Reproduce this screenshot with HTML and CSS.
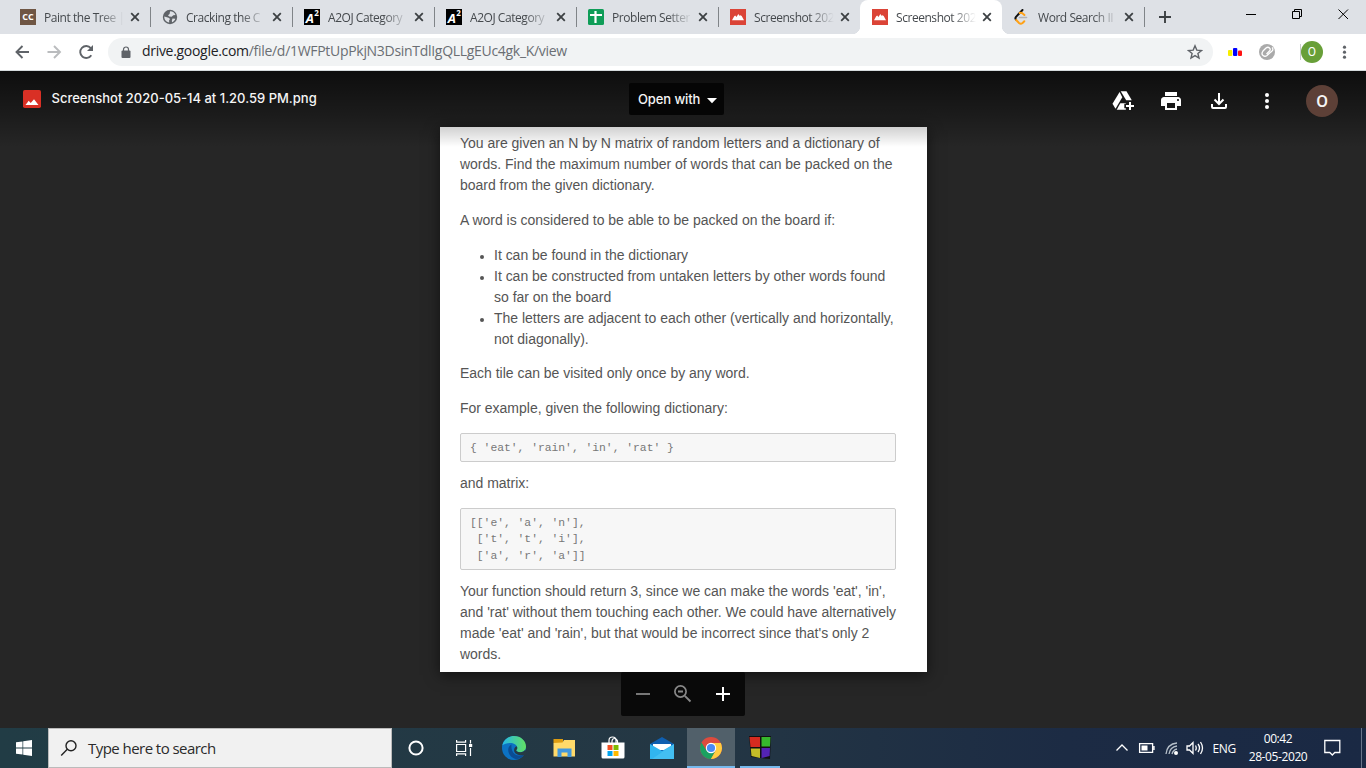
FILE: index.html
```html
<!DOCTYPE html>
<html lang="en">
<head>
<meta charset="utf-8">
<title>Screenshot 2020-05-14 at 1.20.59 PM.png</title>
<link rel="stylesheet" href="styles.css">
</head>
<body>
<svg class="defs" width="0" height="0">
  <symbol id="close" viewBox="0 0 10 10"><path d="M1.2 1.2l7.6 7.6M8.8 1.2L1.2 8.8" stroke="#3c4043" stroke-width="1.8" fill="none"/></symbol>
  <symbol id="image" viewBox="0 0 16 16"><path fill="#db4437" d="M0 0h16v16H0z"/><path fill="#fff" d="M2 11.3l2.2-4 1-.8 1.3 1.5L8.300 5l1.200 1.800 1-.6 1.200.8 2.300 4.300z"/></symbol>
</svg>
<header class="tabstrip">
  <div class="tab"><svg class="fav" viewBox="0 0 16 16"><rect width="16" height="16" fill="#6f5644"/><text x="8" y="11.300" text-anchor="middle" class="fav-cc">CC</text></svg><span class="tab-title">Paint the Tree |</span><svg class="x"><use href="#close"/></svg></div>
  <div class="tab"><svg class="fav" viewBox="0 0 16 16"><circle cx="8" cy="8" r="7.200" fill="#5f6368"/><path fill="#dee1e6" d="M8.200 2.300c2.500 0 4.600 1.500 5.300 3.700l-2.200.2-1.600 1.600-2.500-.3-1.200-1.300 1.600-1.100.2-1.500zM2.300 7.500l4.300 1.300 1.500 1.300-1 1.200.1 2.300c-3-.5-5-3-4.900-6.100zM10.500 9.500l2.800.2c-.5 1.600-1.700 2.900-3.200 3.500l-.3-1.500z"/></svg><span class="tab-title">Cracking the C</span><svg class="x"><use href="#close"/></svg></div>
  <div class="tab"><svg class="fav" viewBox="0 0 16 16"><rect width="16" height="16" fill="#000"/><text x="1.800" y="14.200" class="fav-a">A</text><text x="10.200" y="7" class="fav-2">2</text></svg><span class="tab-title">A2OJ Category</span><svg class="x"><use href="#close"/></svg></div>
  <div class="tab"><svg class="fav" viewBox="0 0 16 16"><rect width="16" height="16" fill="#000"/><text x="1.800" y="14.200" class="fav-a">A</text><text x="10.200" y="7" class="fav-2">2</text></svg><span class="tab-title">A2OJ Category</span><svg class="x"><use href="#close"/></svg></div>
  <div class="tab"><svg class="fav" viewBox="0 0 16 16"><rect width="16" height="16" rx="1.500" fill="#0f9d58"/><path d="M2 6h12M7.500 2v12" stroke="#fff" stroke-width="2.200"/></svg><span class="tab-title">Problem Setter</span><svg class="x"><use href="#close"/></svg></div>
  <div class="tab no-line"><svg class="fav"><use href="#image"/></svg><span class="tab-title">Screenshot 202</span><svg class="x"><use href="#close"/></svg></div>
  <div class="tab active no-line"><svg class="fav"><use href="#image"/></svg><span class="tab-title">Screenshot 202</span><svg class="x"><use href="#close"/></svg></div>
  <div class="tab"><svg class="fav" viewBox="0 0 16 16" fill="none" stroke-linecap="round"><path d="M5.500 8.500h7" stroke="#b3b3b3" stroke-width="1.600"/><path d="M8.500 1L2 7.800Q.8 9.200 2 10.700" stroke="#111" stroke-width="2"/><path d="M2.200 11l2.800 3q1.700 1.400 3.600 0l1.700-1.700M5.800 4q1.600-.7 2.900.5l1.700 1.500" stroke="#ffa116" stroke-width="2"/></svg><span class="tab-title">Word Search II</span><svg class="x"><use href="#close"/></svg></div>
  <svg class="newtab" viewBox="0 0 12 12"><path d="M0 6h12M6 0v12" stroke="#3c4043" stroke-width="1.900"/></svg>
  <svg class="winctl" viewBox="0 0 104 12" fill="none" stroke="#000"><path d="M0 6.500h10M46.500 3.500h7v7h-7zM48.500 3.500v-2h7v7h-2M92.500 1.500l9.500 9.500M102 1.500L92.500 11"/></svg>
</header>
<nav class="toolbar">
  <svg class="nav-icons" viewBox="0 0 84 20" fill="none" stroke-width="1.900"><path d="M15 10H2.500M8.500 4l-6 6 6 6" stroke="#5f6368"/><path d="M33.500 10H46M40 4l6 6-6 6" stroke="#babcbe"/><path d="M77.300 13.200A6 6 0 1 1 76.800 6.100" stroke="#5f6368"/><path d="M79 3v6h-6z" fill="#5f6368"/></svg>
  <div class="omnibox">
    <svg class="lock" viewBox="0 0 10 12"><path d="M2.500 5V3.500a2.500 2.500 0 0 1 5 0V5" fill="none" stroke="#5f6368" stroke-width="1.200"/><rect x=".5" y="4.500" width="9" height="7.500" rx="1" fill="#5f6368"/></svg>
    <span class="url"><b>drive.google.com</b>/file/d/1WFPtUpPkjN3DsinTdlIgQLLgEUc4gk_K/view</span>
    <svg class="star" viewBox="0 0 16 16"><path d="M8 1.800l1.800 4.300 4.700.4-3.600 3 1.100 4.600L8 11.600 4 14.100l1.100-4.600-3.600-3 4.700-.4z" fill="none" stroke="#5f6368" stroke-width="1.400"/></svg>
  </div>
  <svg class="exts" viewBox="0 0 136 24"><rect x="9" y="10" width="4.300" height="6" rx="1" fill="#f7ee00"/><rect x="14" y="8" width="4.300" height="8" rx="1" fill="#00f"/><rect x="19" y="10.500" width="4" height="5.500" rx="1" fill="#f11"/><circle cx="48" cy="12" r="8" fill="#aaa"/><path d="M53 7.500q1.800 1.500 0 3.500L48 15.500q-2 1.500-4 0t0-4.500l3-3q2-1.500 3.500 0t0 3L47.500 14" fill="none" stroke="#fff" stroke-width="1.300"/><path d="M81.500 4v16" stroke="#c9cbce"/><circle cx="93" cy="12" r="11" fill="#689f38"/><text x="93" y="16" text-anchor="middle" class="avatar-sm">O</text><g fill="#5f6368"><circle cx="125.500" cy="7.200" r="1.600"/><circle cx="125.500" cy="12.200" r="1.600"/><circle cx="125.500" cy="17.200" r="1.600"/></g></svg>
</nav>
<main class="viewer">
  <article class="page">
    <p>You are given an N by N matrix of random letters and a dictionary of<br>words. Find the maximum number of words that can be packed on the<br>board from the given dictionary.</p>
    <p>A word is considered to be able to be packed on the board if:</p>
    <ul>
      <li>It can be found in the dictionary</li>
      <li>It can be constructed from untaken letters by other words found<br>so far on the board</li>
      <li>The letters are adjacent to each other (vertically and horizontally,<br>not diagonally).</li>
    </ul>
    <p>Each tile can be visited only once by any word.</p>
    <p>For example, given the following dictionary:</p>
    <pre>{ 'eat', 'rain', 'in', 'rat' }</pre>
    <p>and matrix:</p>
    <pre class="matrix">[['e', 'a', 'n'],
 ['t', 't', 'i'],
 ['a', 'r', 'a']]</pre>
    <p>Your function should return 3, since we can make the words 'eat', 'in',<br>and 'rat' without them touching each other. We could have alternatively<br>made 'eat' and 'rain', but that would be incorrect since that's only 2<br>words.</p>
  </article>
  <div class="topbar">
    <div class="file"><svg width="18" height="18" viewBox="0 0 18 18"><rect width="18" height="18" rx="1.800" fill="#d93025"/><path d="M2.500 15l3.200-4.200 2 2.200L11 9.200l4.500 5.800z" fill="#fff"/></svg><span>Screenshot 2020-05-14 at 1.20.59 PM.png</span></div>
    <div class="open"><span>Open with</span><svg width="10" height="6" viewBox="0 0 10 6"><path d="M0 0h10L5 5.300z" fill="#fff"/></svg></div>
    <div class="actions">
      <svg width="24" height="24" viewBox="0 0 24 24" fill="#fff"><path d="M8.600 3L1.500 14.800l3 5 6.800-11.600z"/><path d="M9.700 2.200h5.800l5.300 9h-5.600z"/><path d="M9.300 14.200h5.500v6.600H5.700z"/><path d="M18.500 12v9.500M13.300 17h9.500" stroke="#171717" stroke-width="4.500"/><path d="M19 13v8M15 17h8" stroke="#fff" stroke-width="2"/></svg>
      <svg width="24" height="24" viewBox="0 0 24 24" fill="#fff"><path d="M19 8H5c-1.660 0-3 1.340-3 3v6h4v4h12v-4h4v-6c0-1.660-1.340-3-3-3zm-3 11H8v-5h8v5zm3-7c-.55 0-1-.45-1-1s.45-1 1-1 1 .45 1 1-.45 1-1 1zm-1-9H6v4h12V3z"/></svg>
      <svg width="24" height="24" viewBox="0 0 24 24" fill="none" stroke="#fff" stroke-width="2"><path d="M12 4v10M7.500 10.500L12 15l4.500-4.500M5 15v3q0 1 1 1h12q1 0 1-1v-3"/></svg>
      <svg width="24" height="24" viewBox="0 0 24 24" fill="#fff"><circle cx="12" cy="6" r="2"/><circle cx="12" cy="12" r="2"/><circle cx="12" cy="18" r="2"/></svg>
      <span class="avatar">O</span>
    </div>
  </div>
  <div class="zoombar"><svg width="124" height="44" viewBox="0 0 124 44" fill="none"><path d="M15 22h14" stroke="#777" stroke-width="2"/><circle cx="59.500" cy="19.500" r="5.600" stroke="#888" stroke-width="1.700"/><path d="M57 19.500h5M63.800 23.800l5.700 5.700" stroke="#888" stroke-width="1.900"/><path d="M95 22h14M102 15v14" stroke="#fff" stroke-width="2"/></svg></div>
</main>
<footer class="taskbar">
  <div class="start"><svg width="16" height="16" viewBox="0 0 16 16" fill="#fff"><path d="M0 2.300l6.500-.9v6.200H0zM7.200 1.300L16 0v7.600H7.200zM0 8.400h6.500v6.200L0 13.700zM7.200 8.400H16V16l-8.800-1.300z"/></svg></div>
  <div class="search"><svg width="18" height="18" viewBox="0 0 18 18" fill="none" stroke="#222" stroke-width="1.400"><circle cx="11" cy="6.700" r="5"/><path d="M7.300 10.300L1.200 16.400"/></svg><span>Type here to search</span></div>
  <div class="apps">
    <div class="app"><svg viewBox="0 0 24 24"><circle cx="12" cy="12" r="6.600" fill="none" stroke="#fff" stroke-width="2"/></svg></div>
    <div class="app"><svg viewBox="0 0 24 24" fill="none" stroke="#fff" stroke-width="1.200"><path d="M3.600 8.500h9v7h-9zM3.600 4v2.200h9V4M3.600 20v-2.200h9V20M17.500 4v3.500M17.500 12v8"/><path fill="#fff" stroke="none" d="M16 8h3.200v3H16z"/></svg></div>
    <div class="app"><svg viewBox="0 0 24 24"><defs><linearGradient id="eg" x1="0" x2="1"><stop stop-color="#25b8e8"/><stop offset="1" stop-color="#62df62"/></linearGradient></defs><circle cx="12" cy="12" r="12" fill="#0c72c3"/><path fill="url(#eg)" d="M.3 9.500C1.500 3.800 6.300 0 12 0c7 0 12 5 12 10.500 0 3.600-2.700 5.700-5.700 5.700-2.800 0-4-1-4-1.900 0-.8.900-1 .9-2.700C15.200 9.500 12.500 7 8.500 7 5 7 2 8 .3 9.500z"/><path fill="#0b4c93" d="M9.500 8.500C6.700 10 5.700 13 6.500 16c1 4 4.500 6.800 8.700 7.300 3-.6 5.600-2.500 7.200-5-3 1.800-7 1.800-9.800-.4-2.700-2.200-3.500-6-3.100-9.400z"/><path fill="#263944" d="M14.200 14.300c0 .9 1.200 1.900 4.100 1.900 2.300 0 4.200-1 5.100-2.600L25 18l-2 1c-4 1.100-10.900-.2-10.900-4.700 0-2 1-3.500 2.500-4 1.500 2 .3 3.100-.4 4z"/></svg></div>
    <div class="app"><svg viewBox="0 0 24 24"><path fill="#dd9c11" d="M1.500 3h9.500v4H1.500z"/><path fill="#ffda6a" d="M1.500 7l9-.5L12 4h11v16.500H1.500z"/><path fill="#4298dd" d="M5.500 12.500h14v8.500h-4v-4.500h-6V21h-4z"/></svg></div>
    <div class="app"><svg viewBox="0 0 24 24"><path d="M8 7V4.500Q8 1 11.500 1T15 4.500V7M11 7V5q.3-2.500 2.500-2.500T16.500 5v2" fill="none" stroke="#fff" stroke-width="1.200"/><path fill="#fff" d="M.5 6.500h23V21q0 1.500-1.500 1.500H2Q.5 22.500.5 21z"/><path fill="#f25022" d="M6.500 9h5v5h-5z"/><path fill="#7fba00" d="M12.500 9h5v5h-5z"/><path fill="#00a4ef" d="M6.500 15h5v5h-5z"/><path fill="#ffb900" d="M12.500 15h5v5h-5z"/></svg></div>
    <div class="app"><svg viewBox="0 0 24 24"><path fill="#0f5fb0" d="M0 8l12-7 12 7v8H0z"/><path fill="#fff" d="M3 8h18v6H3z"/><path fill="#31b5ef" d="M0 8l12 7 12-7v15H0z"/><path fill="#55caf5" d="M24 8L2 23h22z" opacity=".5"/></svg></div>
    <div class="app on"><svg viewBox="0 0 24 24"><circle cx="12" cy="12" r="11" fill="#dd4b3e"/><path fill="#ffcd40" d="M12 7h9.800A11 11 0 0 1 11.500 23L16.500 14.500z"/><path fill="#1ba160" d="M2.500 6.500A11 11 0 0 0 11.800 23l4.700-8.500L12 17l-4.500-2.500z"/><circle cx="12" cy="12" r="5.200" fill="#fff"/><circle cx="12" cy="12" r="4.100" fill="#4a8af4"/></svg></div>
    <div class="app run"><svg viewBox="0 0 24 24"><path fill="#111" d="M1 0h22l-1 23L3 21z"/><path fill="#d62b20" d="M1.500 1h10.500v10H2.500z"/><path fill="#36b82c" d="M13.500 1h9l-.5 9.500h-8.500z"/><path fill="#c5bd28" d="M2.800 12.500H12V22l-8.500-2z"/><path fill="#5323b4" d="M13.500 12H22l-.4 8-8.100 2z"/></svg></div>
  </div>
  <div class="tray">
    <svg width="88" height="18" viewBox="0 0 88 18" fill="none" stroke="#fff" stroke-width="1.300"><path d="M.5 11.500L6 6l5.500 5.500"/><path d="M23.600 4.600h13v8.800h-13zM38 7v4"/><path fill="#fff" stroke="none" d="M25.500 6.500h6v5h-6z"/><g stroke="#b6c0ca"><path d="M50 15Q51 5 61 4M53 15q1-7 8-8M56 15q1-4 5-5"/></g><circle cx="60" cy="14" r="2" fill="#fff" stroke="none"/><path d="M71 7h2.500L77 3.500v11L73.500 11H71zM79.500 6.500q1.500 2.500 0 5M82 5q3 4 0 8M84.500 3q4 6 0 12"/></svg>
    <span class="lang">ENG</span>
    <div class="clock"><span>00:42</span><span>28-05-2020</span></div>
    <svg width="17" height="18" viewBox="0 0 17 18" fill="none" stroke="#fff" stroke-width="1.300"><path d="M.8 1.500h15v12h-5L8.300 16l-2.500-2.500h-5z"/></svg>
  </div>
</footer>
</body>
</html>
```
FILE: styles.css
```css
* { box-sizing: border-box; }
body { margin: 0; width: 1366px; height: 768px; overflow: hidden; display: flex; flex-direction: column; background: #262626; font-family: "Open Sans", "Noto Sans", sans-serif; }
.defs { position: absolute; }
.tabstrip { height: 34px; flex: none; display: flex; background: #dee1e6; padding-left: 8px; }
.tab { position: relative; width: 142px; height: 34px; flex: none; display: flex; align-items: center; padding-left: 12px; }
.tab::after { content: ""; position: absolute; right: -1px; top: 7px; width: 1px; height: 20px; background: #808488; }
.no-line::after { display: none; }
.fav { width: 16px; height: 16px; flex: none; }
.fav-cc { font: bold 9px "Open Sans", sans-serif; fill: #fff; }
.fav-a { font: italic bold 13px "Open Sans", sans-serif; fill: #fff; }
.fav-2 { font: bold 8px "Open Sans", sans-serif; fill: #fff; }
.tab-title { margin-left: 8px; width: 80px; white-space: nowrap; font-size: 12px; letter-spacing: -0.45px; color: #45494d; -webkit-mask-image: linear-gradient(90deg, #000 55px, transparent 80px); mask-image: linear-gradient(90deg, #000 55px, transparent 80px); }
.x { width: 10px; height: 10px; margin-left: 6px; flex: none; }
.active { background: #fff; border-radius: 8px 8px 0 0; }
.active::before { content: ""; position: absolute; left: -8px; right: -8px; bottom: 0; height: 8px; background: radial-gradient(circle at 0 0, transparent 8px, #fff 8.500px) left / 8px 8px no-repeat, radial-gradient(circle at 100% 0, transparent 8px, #fff 8.500px) right / 8px 8px no-repeat; }
.newtab { width: 12px; height: 12px; margin: 11px 0 0 15px; flex: none; }
.winctl { width: 104px; height: 12px; margin: 8px 0 0 75px; flex: none; }
.toolbar { height: 37px; flex: none; display: flex; background: #fff; border-bottom: 1px solid #d5dadc; padding: 4px 0 4px 14px; }
.nav-icons { width: 84px; height: 20px; margin: 4px 10px 0 0; }
.omnibox { width: 1105px; height: 28px; border-radius: 14px; background: #f1f3f4; display: flex; align-items: center; padding: 0 10px 0 13px; }
.lock { width: 10px; height: 12px; margin-right: 11px; }
.url { font-size: 14px; line-height: 20px; padding-bottom: 2px; letter-spacing: -0.3px; color: #6a6e73; flex: 1; }
.url b { font-weight: 400; color: #202124; }
.star { width: 16px; height: 16px; }
.exts { width: 136px; height: 24px; margin: 2px 0 0 6px; }
.avatar-sm { font: 12px Roboto, sans-serif; fill: #fff; }
.viewer { position: relative; height: 657px; flex: none; background: #262626; padding: 56px 439px 0 440px; }
.page { width: 487px; height: 545px; background: #fff; padding: 6px 20px 0; color: #555; font: 14px/21px "Liberation Sans", Arial, sans-serif; letter-spacing: -0.014px; white-space: nowrap; box-shadow: 0 3px 14px rgba(0,0,0,.55); }
.page p { margin: 0 0 13.800px; }
.page ul { margin: 0 0 13.600px; padding-left: 34px; }
.page li::marker { font-size: 12px; }
.page pre { margin: 0 0 11px; width: 436px; height: 29px; padding: 6px 9px; border: 1px solid #ccc; border-radius: 2px; background: #f7f7f7; color: #777; font: 11.350px/16.500px "Liberation Mono", monospace; }
.page .matrix { height: 62px; }
.topbar { position: absolute; left: 0; top: 0; width: 100%; height: 76px; display: grid; grid-template-columns: 629px 95px 1fr; align-items: start; background: linear-gradient(rgba(0,0,0,.65), rgba(0,0,0,.2) 54px, transparent); font-family: Inter, sans-serif; color: #f5f5f5; }
.file { display: flex; align-items: center; gap: 10.500px; padding: 19px 0 0 23px; font-size: 13px; font-weight: 500; }
.file span { margin-bottom: 2px; }
.open { margin-top: 12px; height: 32px; border-radius: 2px; background: #050505; display: flex; align-items: center; gap: 7px; padding-left: 9px; font-size: 13px; font-weight: 500; letter-spacing: -0.1px; }
.open span { margin-bottom: 1px; }
.open svg { margin-top: 3px; }
.actions { display: flex; align-items: center; gap: 24px; padding: 14px 0 0 387px; }
.avatar { width: 32px; height: 32px; margin-left: 3px; border-radius: 50%; background: #5d4037; display: flex; align-items: center; justify-content: center; font: 500 17px Roboto, sans-serif; }
.zoombar { position: absolute; left: 621px; top: 601px; width: 124px; height: 44px; border-radius: 2px; background: #090909; }
.taskbar { height: 40px; flex: none; display: flex; background: linear-gradient(90deg, #213c45, #243744 50%, #1c2b44 78%, #1a2944); color: #fff; }
.start { width: 48px; display: flex; align-items: center; justify-content: center; }
.search { width: 344px; display: flex; align-items: center; gap: 10px; padding-left: 11px; background: #f1f1f1; border: 1px solid #bbb; color: #2b2b2b; font-size: 15px; letter-spacing: -0.55px; }
.apps { display: flex; }
.app { width: 48px; margin-right: 1.200px; height: 40px; display: flex; align-items: center; justify-content: center; }
.app svg { width: 24px; height: 24px; }
.on { background: #51606a; border-bottom: 2px solid #76b9ed; padding-top: 2px; }
.run { width: 40px; margin-left: 4px; border-bottom: 2px solid #76b9ed; padding-top: 2px; }
.tray { margin-left: auto; display: flex; align-items: center; padding-right: 20px; border-right: 1px solid #68758a; margin-right: 4px; font-size: 12px; }
.lang { margin-left: 8px; letter-spacing: -0.3px; }
.clock { width: 60px; margin: 0 16px 0 12px; display: flex; flex-direction: column; align-items: center; line-height: 18px; letter-spacing: -0.4px; }
```
